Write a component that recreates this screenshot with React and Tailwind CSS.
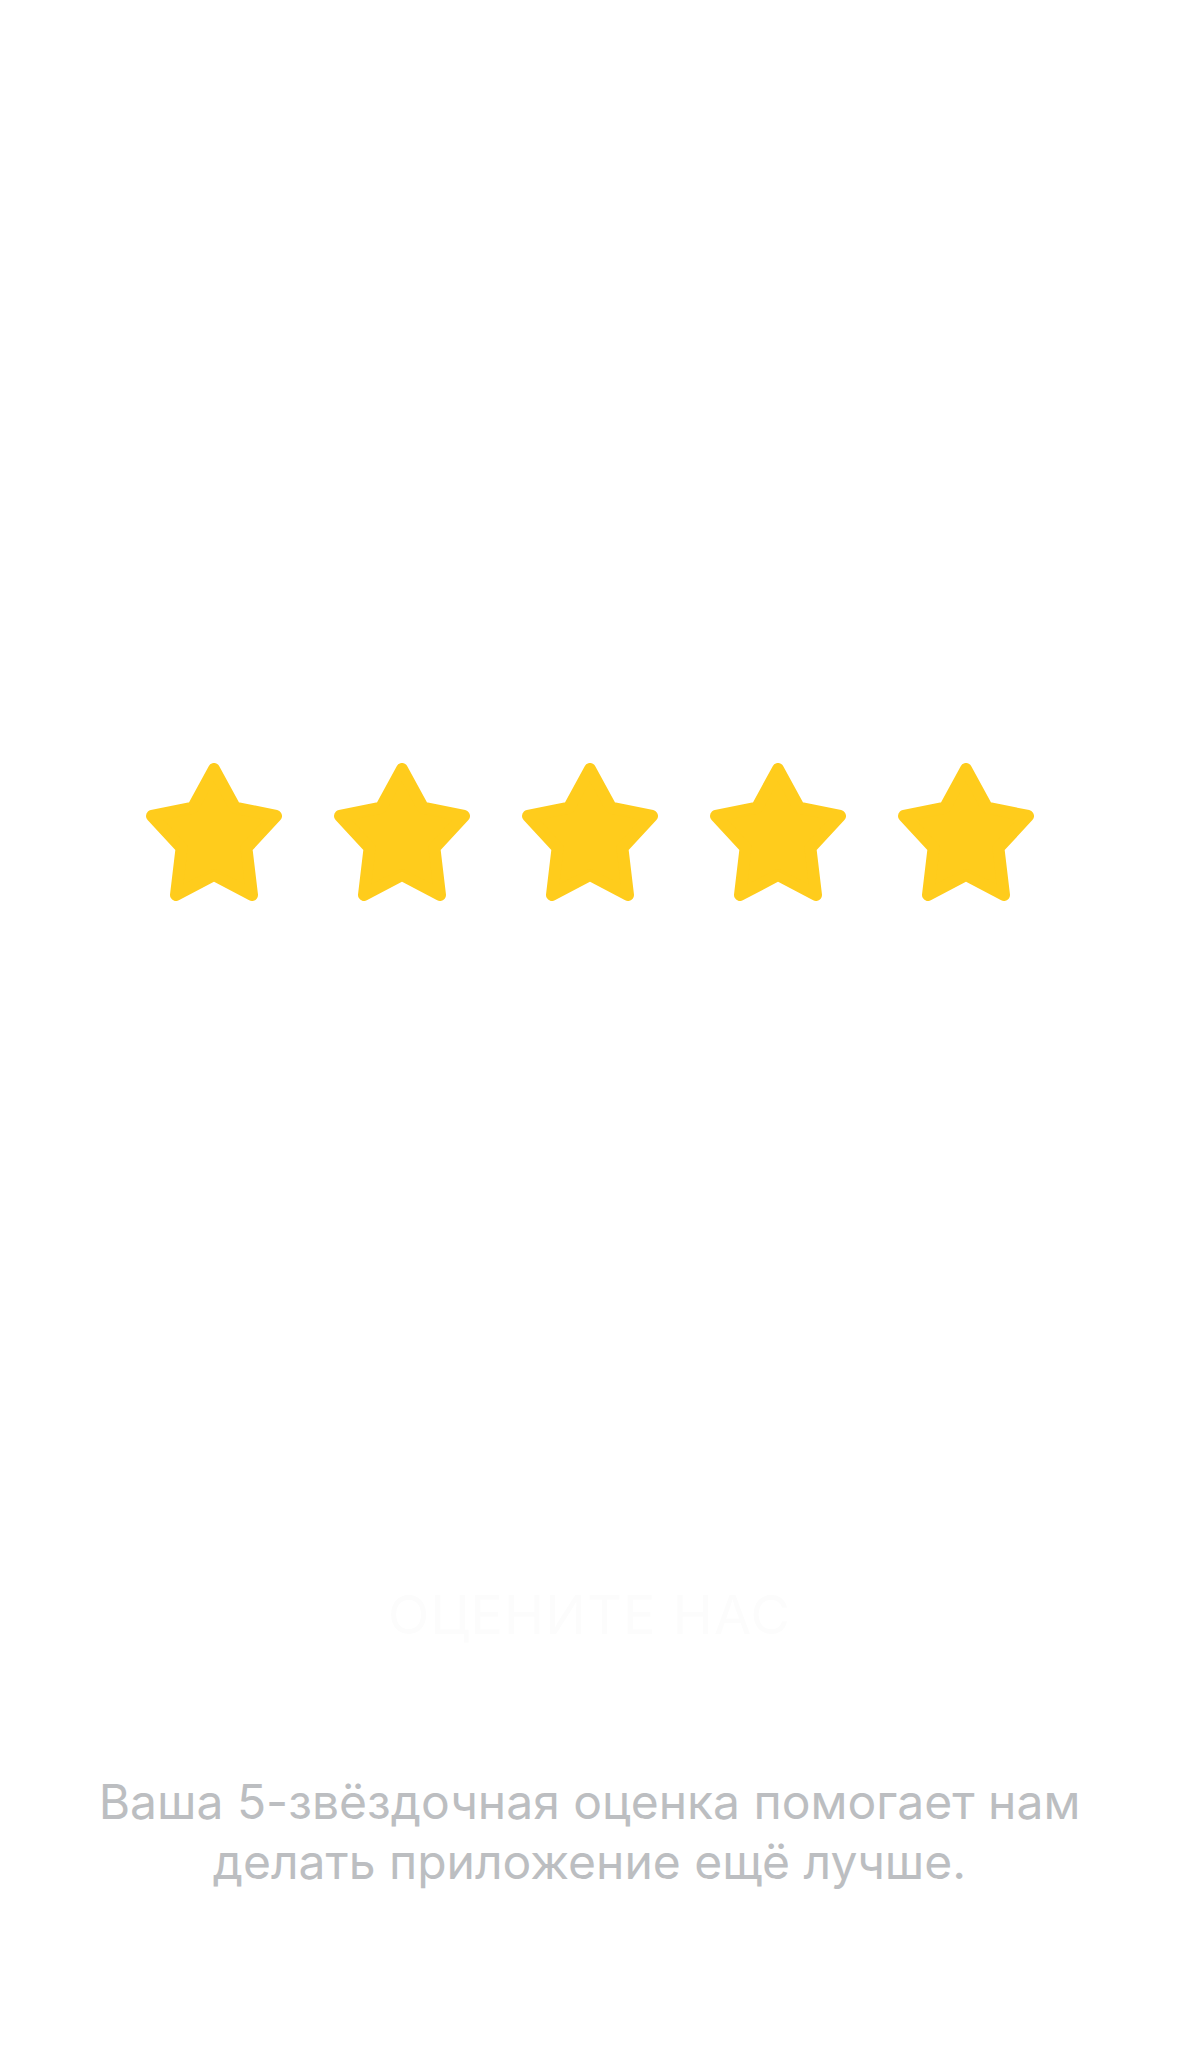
import React from 'react';

function Star() {
  // rounded star: sharp polygon + round-joined stroke of the same colour
  return (
    <svg width="136" height="138" viewBox="0 0 136 138" className="shrink-0">
      <polygon
        points="68,6 89,44.6 130,53 100.4,85 106,132 68,112 30,132 35.6,85 6,53 47,44.6"
        fill="#FFCC1C"
        stroke="#FFCC1C"
        strokeWidth="12"
        strokeLinejoin="round"
      />
    </svg>
  );
}

export default function App() {
  return (
    <div className="w-[1179px] h-[2061px] bg-white flex flex-col items-center font-['Inter','Noto_Sans',sans-serif]">
      {/* Rating */}
      <div className="mt-[763px] flex gap-[52px]">
        {[0, 1, 2, 3, 4].map((i) => (
          <Star key={i} />
        ))}
      </div>

      {/* Button label, almost faded out */}
      <div className="mt-[687px] text-[54px] leading-[54px] text-[#fcfcfc] tracking-[0.02em]">
        ОЦЕНИТЕ НАС
      </div>

      {/* Caption */}
      <p className="mt-[130px] w-[1060px] text-center text-[48px] leading-[60px] text-[#bcbec1]">
        Ваша 5-звёздочная оценка помогает нам
        <br />
        делать приложение ещё лучше.
      </p>
    </div>
  );
}
